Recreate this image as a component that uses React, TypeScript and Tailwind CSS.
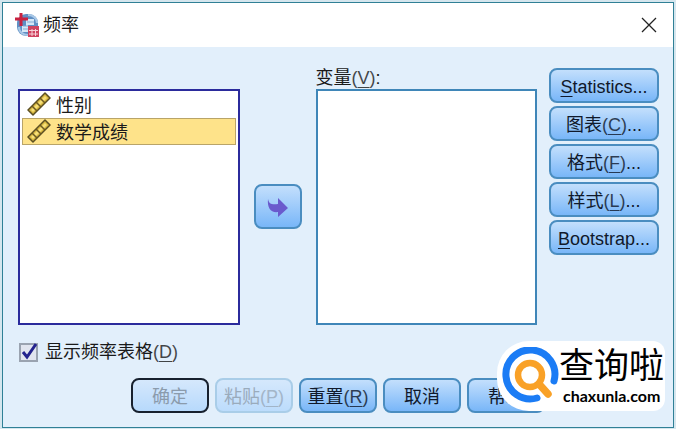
import type { ButtonHTMLAttributes, ReactNode } from 'react'
import clsx from 'clsx'

const variables = ['性别', '数学成绩']

const options = [
  { label: '', hotkey: 'S', rest: 'tatistics...' },
  { label: '图表', hotkey: 'C', rest: '...' },
  { label: '格式', hotkey: 'F', rest: '...' },
  { label: '样式', hotkey: 'L', rest: '...' },
  { label: '', hotkey: 'B', rest: 'ootstrap...' },
]

function Key({ children }: { children: ReactNode }) {
  return <span className="underline decoration-1 underline-offset-3">{children}</span>
}

// hotkey in brackets, a bit lighter than the label before it
function Hint({ children }: { children: ReactNode }) {
  return (
    <span className="opacity-80">
      (<Key>{children}</Key>)
    </span>
  )
}

function Button({ className, children, ...props }: ButtonHTMLAttributes<HTMLButtonElement>) {
  return (
    <button
      type="button"
      className={clsx(
        'flex h-[35px] items-center justify-center whitespace-nowrap rounded-lg border-2 bg-linear-to-b pt-0.5',
        className,
      )}
      {...props}
    >
      <span>{children}</span>
    </button>
  )
}

const blue = 'border-[#4a8dc0] from-[#c3dffc] to-[#78b6f8] text-[#10192b]'

function AppIcon() {
  return (
    <svg className="size-6" viewBox="0 0 24 24" aria-hidden="true">
      <rect x="2" y="1" width="21" height="22" rx="9" fill="#5f8fc4" />
      <path d="M4 14c0 5 4 8 9 8M13 2c5 0 9 3 9 8" fill="none" stroke="#a9c8e6" strokeWidth="2" />
      <path d="M11 6h8v6h-6v7H7v-6h4z" fill="#d6e7f6" />
      <path d="M8 13h5M8 16h5M12 9h7" stroke="#83abd4" />
      <path d="M6 0v13M0 6h13" stroke="#c9213f" strokeWidth="3" />
      <path d="M13 13h11v11H13z" fill="#cf4460" />
      <path d="M14 17.500h9M14 21h9M17 16v7M20.500 16v7" stroke="#f7d3da" />
    </svg>
  )
}

function RulerIcon() {
  return (
    <svg className="size-[25px] shrink-0" viewBox="0 0 25 25" aria-hidden="true">
      <path d="M1 18 18 1l5 5L6 23z" fill="#d8b840" stroke="#5b4f22" strokeWidth="1.500" strokeLinejoin="round" />
      <path d="M4 18 18 4l2 2L6 20z" fill="#f6df78" />
      <path d="M5 14l5 5M9 10l5 5M13 6l5 5" stroke="#6d5a20" strokeWidth="1.500" />
    </svg>
  )
}

function Watermark() {
  return (
    <div className="absolute right-2 bottom-4 flex h-[70px] w-[168px] items-center rounded-l-[32px] rounded-r-xl bg-white pl-1">
      <svg className="size-[58px] shrink-0" viewBox="0 0 58 58" aria-hidden="true">
        <path d="M36 51A24.500 24.500 0 1 1 53 34" fill="none" stroke="#1b7cf5" strokeWidth="7" strokeLinecap="round" />
        <circle cx="29" cy="28" r="12" fill="none" stroke="#f9a127" strokeWidth="6.500" />
        <path d="M38 37l9 10" stroke="#f9a127" strokeWidth="7.500" strokeLinecap="round" />
      </svg>
      <div className="whitespace-nowrap text-black">
        <div className="text-[35px] leading-10">查询啦</div>
        <div className="pl-1 font-['Lato',sans-serif] text-[16px] leading-5 font-bold">chaxunla.com</div>
      </div>
    </div>
  )
}

export default function App() {
  return (
    <div className="min-h-screen bg-[#d5e6ee] px-0.5 pt-0.5 font-['Liberation_Sans','Noto_Sans_CJK_SC',sans-serif] text-[18px] leading-6 text-[#1a1a1a]">
      <main className="relative border border-[#2f8096] bg-[#e2effb] pb-3.5">
        <header className="flex h-11 items-center gap-1 bg-white px-3">
          <AppIcon />
          <h1 className="flex-1">频率</h1>
          <button type="button" aria-label="关闭" className="flex size-6 items-center justify-center">
            <svg className="size-4" viewBox="0 0 16 16" fill="none" stroke="#222" strokeWidth="1.300">
              <path d="M1 1l14 14M15 1 1 15" />
            </svg>
          </button>
        </header>

        <div className="flex items-start pt-[21px] pr-3.5 pl-[15px]">
          <div className="flex-1 pt-[21px]">
            <ul className="h-[236px] border-2 border-[#2b2b9c] bg-white">
              {variables.map((name, i) => (
                <li
                  key={name}
                  className={clsx(
                    'mx-0.5 flex h-[27px] items-center gap-1 border pl-1',
                    i === 1 ? 'border-[#b9a468] bg-[#fee38a]' : 'border-transparent',
                  )}
                >
                  <RulerIcon />
                  <span className="pt-0.5">{name}</span>
                </li>
              ))}
            </ul>
          </div>

          <Button className={clsx('mx-3.5 mt-[116px] h-[45px] w-12', blue)} aria-label="移动">
            <svg className="size-6" viewBox="0 0 24 24" aria-hidden="true">
              <path d="M2 3c1 5 4 6 10 5V2l10 10-10 9v-5C5 17 1 12 2 3z" fill="#6a5acd" />
            </svg>
          </Button>

          <div className="flex-1">
            <div id="targets" className="h-[21px] leading-5">
              变量<Hint>V</Hint>:
            </div>
            <ul aria-labelledby="targets" className="h-[236px] border-2 border-[#3f86b8] bg-white" />
          </div>

          <div className="ml-3 flex w-[110px] flex-col gap-[3px]">
            {options.map((o) => (
              <Button key={o.hotkey} className={blue}>
                {o.label}
                {o.label ? <Hint>{o.hotkey}</Hint> : <Key>{o.hotkey}</Key>}
                {o.rest}
              </Button>
            ))}
          </div>
        </div>

        <label className="mt-[15px] ml-4 flex w-fit items-center gap-[7px]">
          <span className="relative flex size-[19px]">
            <input
              type="checkbox"
              defaultChecked
              className="peer size-full appearance-none border-2 border-[#9aa3b0] bg-[#e1e5ef]"
            />
            <svg className="pointer-events-none absolute inset-0 hidden peer-checked:block" viewBox="0 0 19 19">
              <path d="M4 9l4 5 9-13" fill="none" stroke="#23238e" strokeWidth="3" />
            </svg>
          </span>
          <span>
            显示频率表格<Hint>D</Hint>
          </span>
        </label>

        <div className="mt-3.5 flex gap-1.5 pl-32">
          <Button disabled className="w-[78px] border-[#17202e] from-[#d5e8fc] to-[#b7d9fc] text-[#8b9bac]">
            确定
          </Button>
          <Button disabled className="w-[78px] border-[#a9cde8] from-[#d5e8fc] to-[#bcdcfc] text-[#9aabbc]">
            粘贴<Hint>P</Hint>
          </Button>
          <Button className={clsx('w-[78px]', blue)}>
            重置<Hint>R</Hint>
          </Button>
          <Button className={clsx('w-[78px]', blue)}>取消</Button>
          <Button className={clsx('w-[78px]', blue)}>帮助</Button>
        </div>

        <Watermark />
      </main>
    </div>
  )
}
